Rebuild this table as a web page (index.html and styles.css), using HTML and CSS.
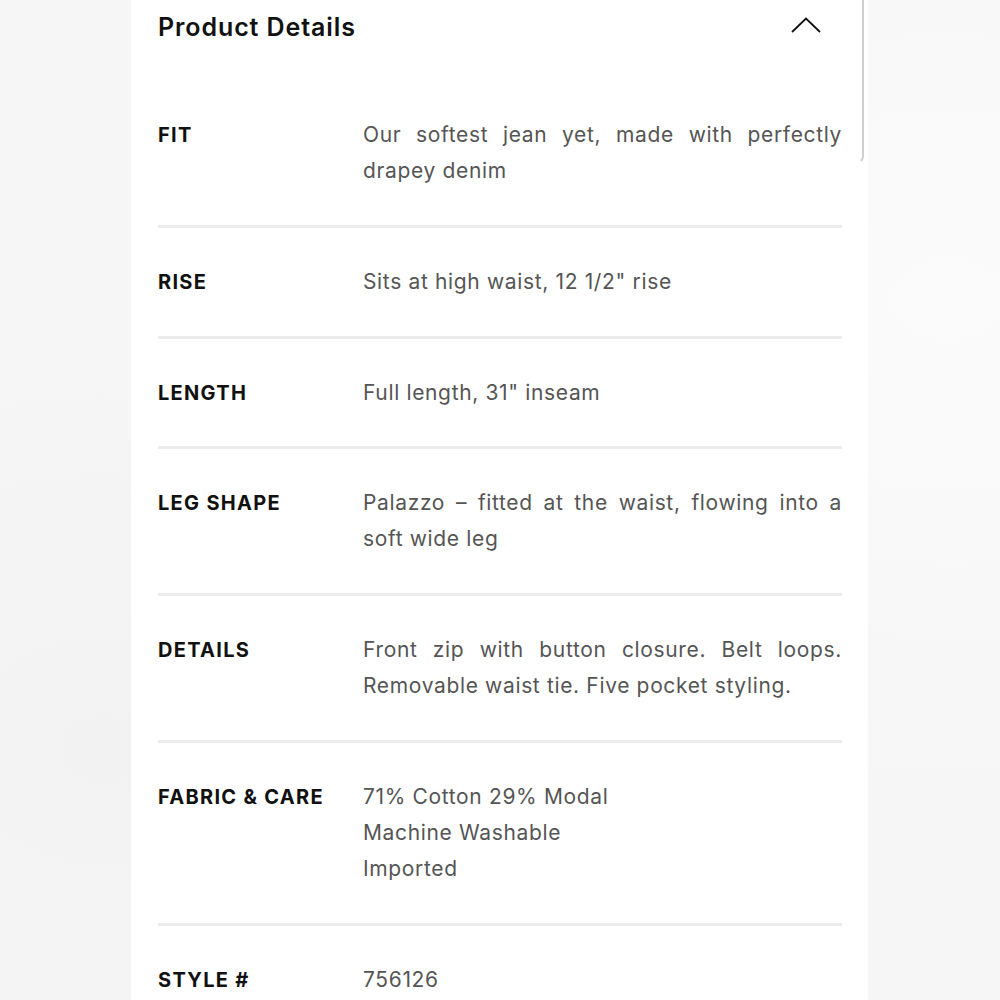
FILE: index.html
```html
<!DOCTYPE html>
<html lang="en">
<head>
    <meta charset="UTF-8">
    <meta name="viewport" content="width=device-width, initial-scale=1.0">
    <title>Product Details</title>
    <link rel="stylesheet" href="styles.css">
</head>
<body>
    <div class="panel">
        <div class="panel-header">
            <h2>Product Details</h2>
            <svg class="chevron" width="30" height="16" viewBox="0 0 30 16">
                <path d="M1 15 L15 1.5 L29 15" fill="none" stroke="#111" stroke-width="1.8"/>
            </svg>
        </div>

        <div class="detail-row">
            <div class="detail-label">FIT</div>
            <div class="detail-value justify">Our softest jean yet, made with perfectly drapey denim</div>
        </div>
        <div class="detail-row">
            <div class="detail-label">RISE</div>
            <div class="detail-value">Sits at high waist, 12 1/2" rise</div>
        </div>
        <div class="detail-row">
            <div class="detail-label">LENGTH</div>
            <div class="detail-value">Full length, 31" inseam</div>
        </div>
        <div class="detail-row">
            <div class="detail-label">LEG SHAPE</div>
            <div class="detail-value justify">Palazzo &ndash; fitted at the waist, flowing into a soft wide leg</div>
        </div>
        <div class="detail-row">
            <div class="detail-label">DETAILS</div>
            <div class="detail-value justify">Front zip with button closure. Belt loops. Removable waist tie. Five pocket styling.</div>
        </div>
        <div class="detail-row">
            <div class="detail-label">FABRIC &amp; CARE</div>
            <div class="detail-value">71% Cotton 29% Modal<br>Machine Washable<br>Imported</div>
        </div>
        <div class="detail-row">
            <div class="detail-label">STYLE #</div>
            <div class="detail-value">756126</div>
        </div>
    </div>
</body>
</html>
```

FILE: styles.css
```css
body {
    margin: 0;
    height: 1000px;
    overflow: hidden;
    background: #f6f6f6;
    background-image:
        radial-gradient(ellipse at 10% 75%, #f2f2f2 0%, rgba(242,242,242,0) 40%),
        radial-gradient(ellipse at 95% 30%, #fbfbfb 0%, rgba(251,251,251,0) 50%);
    font-family: "Inter", "Open Sans", sans-serif;
}

.panel {
    position: relative;
    margin-left: 131px;
    width: 737px;
    min-height: 1000px;
    box-sizing: border-box;
    padding: 1px 26px 0 27px;
    background: #fff;
}

/* thin scroll edge at top right */
.panel::after {
    content: "";
    position: absolute;
    top: 0;
    right: 4px;
    width: 8px;
    height: 162px;
    border-right: 2px solid #cfcfcf;
    border-bottom: 2px solid #cfcfcf;
    border-bottom-right-radius: 8px;
    border-bottom-color: transparent;
}

.panel-header {
    display: flex;
    align-items: center;
    justify-content: space-between;
    height: 52px;
    margin-bottom: 28px;
}

.panel-header h2 {
    margin: 0;
    font-size: 25px;
    font-weight: 600;
    letter-spacing: 0.9px;
    color: #111;
}

.chevron {
    margin-right: 21px;
    margin-top: -4px;
}

.detail-row {
    display: flex;
    padding: 36px 0 36px;
    border-bottom: 3px solid #ececec;
}

.detail-row:nth-child(4) {
    padding-bottom: 35px;
}

.detail-row:last-child {
    border-bottom: none;
}

.detail-label {
    width: 205px;
    flex-shrink: 0;
    font-size: 20px;
    font-weight: 700;
    letter-spacing: 1.3px;
    line-height: 36px;
    color: #111;
}

.detail-value {
    flex: 1;
    font-size: 21px;
    line-height: 36px;
    color: #555;
    letter-spacing: 0.65px;
}

.justify {
    text-align: justify;
}
```
